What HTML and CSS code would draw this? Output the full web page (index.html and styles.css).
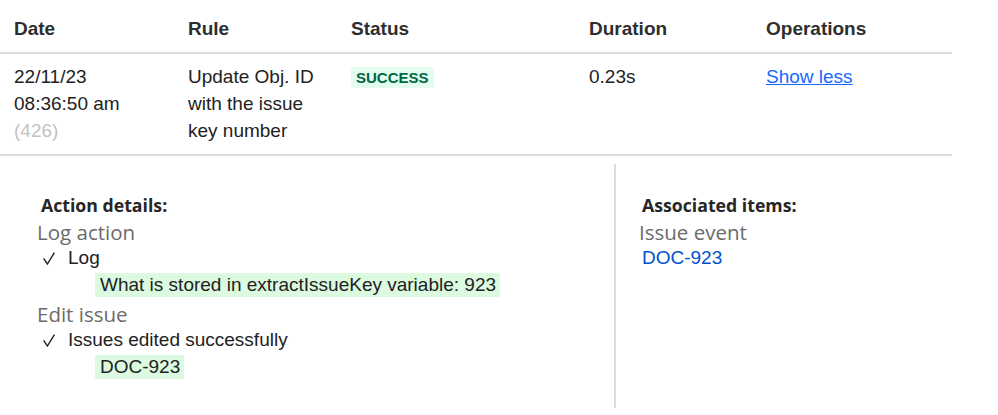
FILE: index.html
```html
<!DOCTYPE html>
<html lang="en">
<head>
<meta charset="utf-8">
<title>Audit log</title>
<link rel="stylesheet" href="styles.css">
</head>
<body>
<div class="log-table">
  <div class="row head">
    <div class="cell">Date</div>
    <div class="cell">Rule</div>
    <div class="cell">Status</div>
    <div class="cell">Duration</div>
    <div class="cell">Operations</div>
  </div>
  <div class="row body">
    <div class="cell">22/11/23<br>08:36:50 am<br><span class="muted">(426)</span></div>
    <div class="cell">Update Obj. ID with the issue key number</div>
    <div class="cell"><span class="lozenge">SUCCESS</span></div>
    <div class="cell">0.23s</div>
    <div class="cell"><a class="link" href="#">Show less</a></div>
  </div>
</div>
<div class="details">
  <div class="panel left">
    <div class="panel-title">Action details:</div>
    <div class="group-title">Log action</div>
    <div class="check-line"><svg class="check" width="12" height="13" viewBox="0 0 12 13"><polyline points="0.6,6.4 4.4,12 11.4,0.6" fill="none" stroke="#222" stroke-width="1.4"/></svg>Log</div>
    <div class="hl">What is stored in extractIssueKey variable: 923</div>
    <div class="group-title">Edit issue</div>
    <div class="check-line"><svg class="check" width="12" height="13" viewBox="0 0 12 13"><polyline points="0.6,6.4 4.4,12 11.4,0.6" fill="none" stroke="#222" stroke-width="1.4"/></svg>Issues edited successfully</div>
    <div class="hl last">DOC-923</div>
  </div>
  <div class="panel right">
    <div class="panel-title">Associated items:</div>
    <div class="group-title">Issue event</div>
    <div class="assoc"><a class="issue-link" href="#">DOC-923</a></div>
  </div>
</div>
</body>
</html>
```
FILE: styles.css
```css
html, body {
  margin: 0;
  padding: 0;
  background: #ffffff;
}
body {
  font-family: "Liberation Sans", Arial, sans-serif;
  font-size: 19px;
  color: #222222;
}
.log-table {
  width: 952px;
}
.row {
  display: grid;
  grid-template-columns: 174px 163px 238px 177px 200px;
  border-bottom: 2px solid #dcdcdc;
}
.cell {
  padding: 0 14px;
  line-height: 27px;
}
.head .cell {
  font-weight: bold;
  color: #2e2e2e;
  padding-top: 15px;
  padding-bottom: 10px;
}
.body .cell {
  padding-top: 9px;
  padding-bottom: 10px;
  height: 81px;
}
.muted {
  color: #c2c2c2;
}
.lozenge {
  display: inline-block;
  background: #e3fcef;
  color: #006644;
  font-weight: bold;
  font-size: 15px;
  line-height: 21px;
  padding: 0 5px;
  border-radius: 3px;
}
.link {
  color: #1769ff;
  text-decoration: underline;
}
.details {
  display: grid;
  grid-template-columns: 614px 1fr;
  margin-top: 8px;
}
.panel {
  padding-top: 28px;
  padding-bottom: 26px;
}
.left {
  padding-left: 37px;
}
.right {
  border-left: 2px solid #dcdcdc;
  padding-left: 23px;
  height: 190px;
}
.panel-title {
  font-family: "Open Sans", "Noto Sans", sans-serif;
  font-weight: bold;
  font-size: 17.7px;
  line-height: 27px;
  color: #262626;
  padding-left: 4px;
}
.right .panel-title {
  padding-left: 3px;
}
.group-title {
  font-family: "Open Sans", "Noto Sans", sans-serif;
  font-size: 20.5px;
  line-height: 26px;
  color: #6b6b6b;
}
.check-line {
  line-height: 25px;
  padding-left: 6px;
}
.check {
  margin-right: 13px;
  vertical-align: -1px;
}
.hl {
  width: fit-content;
  background: #dcfadf;
  line-height: 24px;
  padding: 0 4px 0 5px;
  margin: 3px 0 4px 58px;
}
.hl.last {
  margin-bottom: 3px;
}
.assoc {
  line-height: 25px;
  padding-left: 3px;
}
.issue-link {
  color: #0052cc;
  text-decoration: none;
}
```
